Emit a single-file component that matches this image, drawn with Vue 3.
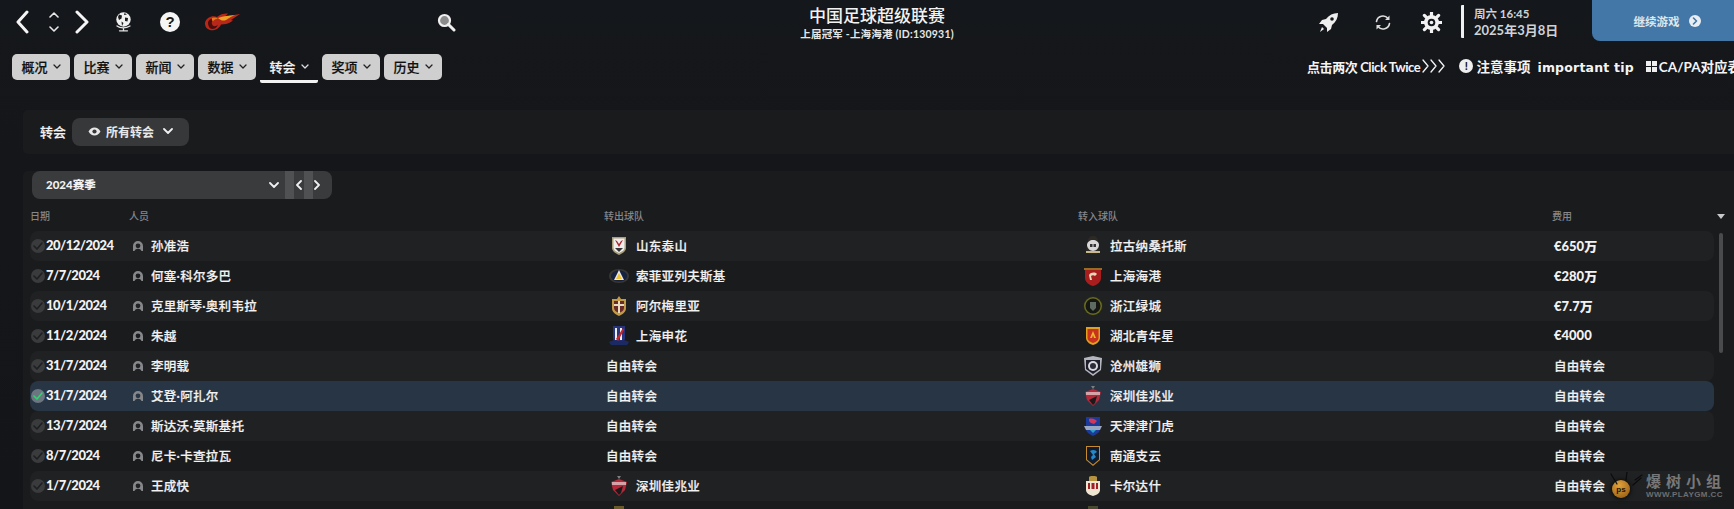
<template>
  <div class="page">
    <header class="top">
      <div class="top-left">
        <svg class="nav-back" width="14" height="24" viewBox="0 0 14 24"><path d="M12 2 3 12l9 10" /></svg>
        <div class="updown">
          <svg width="10" height="8" viewBox="0 0 10 8"><path d="M1 6l4-4 4 4" /></svg>
          <svg width="10" height="8" viewBox="0 0 10 8"><path d="M1 2l4 4 4-4" /></svg>
        </div>
        <svg class="nav-fwd" width="14" height="24" viewBox="0 0 14 24"><path d="M2 2l10 10-10 10" /></svg>
        <svg class="globe" width="17" height="20" viewBox="0 0 17 20">
          <circle cx="8.500" cy="7.500" r="7.200" fill="#f0f0f0" />
          <path d="M4 2.500l3 1-.5 3-2.500 1.500-1-3zM10 5.500l3 .5-.5 3.500-2.500-.5zM6.500 9.500l2 1.500-1.500 3zM9.500 1l2.500 1.500-3 .5z" fill="#1c1c1c" />
          <path d="M2 14c3 2.500 9 2.500 13 0M8.500 16v2.500M4.500 18.800h8" stroke="#e2e2e2" stroke-width="1.300" fill="none" />
        </svg>
        <div class="help">?</div>
        <svg class="flame" width="36" height="18" viewBox="0 0 36 18">
          <path d="M0 10C1 4 8 2 12 4c3-3 8-4 11-3.500l-3 3L35 1l-9 6 2 .5c-4 3-8 4-12 4-2 5-8 6.500-11 5.500C2 16 0 14 0 10z" fill="#b8281a" />
          <path d="M3 10c0-3 4-5.500 8-4-2 .5-5 2-4 5s4 2.500 6 .5c-1 3-3 4.500-6 4.500-2 0-4-3-4-6z" fill="#4d0d0c" />
          <path d="M13 5c5-2 11-2.500 17-3-5 2-6 3.500-9 5s-6 0-8-2z" fill="#eaa323" />
          <path d="M7 5c2-1 4-.5 6 .5-2 .5-4 1-5 3-1-1-1.500-2.500-1-3.500z" fill="#e8761c" />
        </svg>
        <svg class="search" width="19" height="19" viewBox="0 0 19 19">
          <circle cx="7.500" cy="7.500" r="5.500" fill="#8b8b8b" stroke="#f0f0f0" stroke-width="2.200" />
          <path d="M11.500 11.500 17 17" stroke="#f0f0f0" stroke-width="3" stroke-linecap="round" />
        </svg>
      </div>

      <div class="title-box">
        <div class="title">中国足球超级联赛</div>
        <div class="subtitle">上届冠军 -上海海港 (ID:130931)</div>
      </div>

      <div class="top-right">
        <svg class="rocket" width="21" height="21" viewBox="0 0 21 21">
          <path d="M20 1c-5 0-9 2-12 6L4 8 1 12l4 0 4 4 0 4 4-3 1-4c4-3 6-7 6-12z" fill="#eee" />
          <circle cx="14" cy="7" r="1.800" fill="#14171b" />
          <path d="M4 15l2 2-4 3z" fill="#eee" />
        </svg>
        <svg class="sync" width="16" height="17" viewBox="0 0 16 17">
          <path d="M1.500 7.500A6.500 6.500 0 0 1 13 4.500M14.500 9.500A6.500 6.500 0 0 1 3 12.500" fill="none" stroke="#ddd" stroke-width="1.600" />
          <path d="M14.500 1.500v4.500h-4.500zM1.500 15.500v-4.500h4.500z" fill="#ddd" />
        </svg>
        <svg class="gear" width="21" height="21" viewBox="0 0 21 21">
          <path d="M10.500 0.500v20M0.500 10.500h20M3.400 3.400l14.200 14.200M17.600 3.400 3.400 17.600" stroke="#f2f2f2" stroke-width="3.200" fill="none" />
          <circle cx="10.500" cy="10.500" r="7.500" fill="#f2f2f2" />
          <circle cx="10.500" cy="10.500" r="3.800" fill="#14171b" />
          <circle cx="10.500" cy="10.500" r="1.800" fill="#f2f2f2" />
        </svg>
        <div class="clock">
          <div class="clock-time">周六 16:45</div>
          <div class="clock-date">2025年3月8日</div>
        </div>
        <button class="continue" type="button">
          <span>继续游戏</span>
          <span class="continue-dot">
            <svg width="6" height="8" viewBox="0 0 6 8"><path d="M1.500 1 4.500 4l-3 3" /></svg>
          </span>
        </button>
      </div>
    </header>

    <div class="tabs-row">
      <nav class="tabs">
        <div v-for="tab in tabs" :key="tab" class="tab" :class="{ active: tab === '转会' }">
          {{ tab }}
          <svg width="8" height="5" viewBox="0 0 8 5"><path d="M1 1l3 3 3-3" /></svg>
        </div>
      </nav>
      <div class="links">
        <span class="click-twice">点击两次 Click Twice</span>
        <svg class="chevrons" width="23" height="14" viewBox="0 0 23 14">
          <path d="M1 1l5 6-5 6M9 1l5 6-5 6M17 1l5 6-5 6" />
        </svg>
        <span class="info-dot">!</span>
        <span class="tip">注意事项<span class="tip-en">important tip</span></span>
        <span class="grid-icon"><i></i><i></i><i></i><i></i></span>
        <span class="ca">CA/PA对应表</span>
      </div>
    </div>

    <section class="filter-panel">
      <span class="filter-label">转会</span>
      <div class="filter-btn">
        <svg width="13" height="9" viewBox="0 0 13 9">
          <path d="M0.500 4.500C2 1.800 4 0.500 6.500 0.500s4.500 1.300 6 4c-1.500 2.700-3.500 4-6 4s-4.500-1.300-6-4z" fill="#e8e8e8" />
          <circle cx="6.500" cy="4.500" r="2.100" fill="#37383a" />
        </svg>
        所有转会
        <svg class="chev" width="10" height="7" viewBox="0 0 10 7"><path d="M1 1l4 4 4-4" /></svg>
      </div>
    </section>

    <section class="table-panel">
      <div class="season-bar">
        <span class="season-name">2024赛季</span>
        <svg class="chev" width="10" height="7" viewBox="0 0 10 7"><path d="M1 1l4 4 4-4" /></svg>
        <span class="season-sep"></span>
        <svg class="season-arrow" width="6" height="10" viewBox="0 0 6 10"><path d="M5 1 1 5l4 4" /></svg>
        <span class="season-sep second"></span>
        <svg class="season-arrow" width="6" height="10" viewBox="0 0 6 10"><path d="M1 1l4 4-4 4" /></svg>
      </div>

      <div class="grid head">
        <span>日期</span>
        <span>人员</span>
        <span>转出球队</span>
        <span>转入球队</span>
        <span>费用</span>
      </div>
      <svg class="sort" width="8" height="5" viewBox="0 0 8 5"><path d="M0 0h8L4 5z" /></svg>

      <div class="rows">
        <div v-for="(row, i) in rows" :key="i" class="grid row" :class="{ odd: i % 2 === 0, selected: row.selected }">
          <div class="date-cell">
            <span v-if="row.date" class="tick">
              <svg width="10" height="8" viewBox="0 0 10 8"><path d="M1 4l3 3 5-6" /></svg>
            </span>
            <span class="date">{{ row.date }}</span>
          </div>
          <div class="person-cell">
            <svg v-if="row.name" class="person" width="10" height="10" viewBox="0 0 10 10">
              <path fill-rule="evenodd" d="M0 10V5a5 5 0 0 1 10 0v5zM7.400 4.800a2.400 2.400 0 1 1-4.800 0 2.400 2.400 0 0 1 4.800 0zM1.500 10c.5-1.500 2-2.200 3.500-2.200s3 .7 3.500 2.200z" />
            </svg>
            <span class="name">{{ row.name }}</span>
          </div>
          <div class="team-cell">
            <template v-if="row.from">
              <svg class="badge" width="20" height="20" viewBox="0 0 20 20">
                <path v-for="(p, k) in badges[row.from[1]]" :key="k" :d="p[0]" :fill="p[1]" />
              </svg>
              <span class="team">{{ row.from[0] }}</span>
            </template>
            <span v-else-if="row.date" class="free">自由转会</span>
          </div>
          <div class="team-cell">
            <template v-if="row.to">
              <svg class="badge" width="20" height="20" viewBox="0 0 20 20">
                <path v-for="(p, k) in badges[row.to[1]]" :key="k" :d="p[0]" :fill="p[1]" />
              </svg>
              <span class="team">{{ row.to[0] }}</span>
            </template>
          </div>
          <div class="fee" :class="{ cjk: row.fee === '自由转会' }">{{ row.fee }}</div>
        </div>
      </div>
      <div class="scroll-thumb"></div>
    </section>

    <div class="watermark">
      <div class="wm-ball">
        <svg class="wm-spikes" width="44" height="30" viewBox="0 0 44 30">
          <path d="M6 2l6 10M22 0l-1 8M36 6l-8 7M30 8l7-5" />
        </svg>
        <span class="wm-ps">ps</span>
      </div>
      <div class="wm-text">
        <div class="wm-cn">爆树小组</div>
        <div class="wm-url">WWW.PLAYGM.CC</div>
      </div>
    </div>
  </div>
</template>

<script setup>
const tabs = ['概况', '比赛', '新闻', '数据', '转会', '奖项', '历史']

// small crests, each a short list of [path, fill]
const circle = (r) => `M${10 - r} 10a${r} ${r} 0 1 1 ${r * 2} 0 ${r} ${r} 0 0 1-${r * 2} 0z`

const jiazhaoye = [
  ['M2 6l8-3 8 3-2 8-6 6-6-6z', '#b5283a'],
  ['M3 6h14v3H3z', '#d5a2a8'],
  ['M8 0h4l-2 3z', '#7f7f7f'],
  ['M6 14l8-4-2 7-2 2z', '#1a1a1a'],
]

const badges = {
  shandong: [
    ['M3 1h14v11c0 3-3 5-7 7-4-2-7-4-7-7z', '#a89f7a'],
    ['M4.500 2.500h11v9c0 2.500-2 4-5.500 5.500-3.500-1.500-5.500-3-5.500-5.500z', '#eee'],
    ['M6 4l4 7 4-7-2 1-2 3-2-3z', '#b3262c'],
    ['M6 12h8l-4 4z', '#333'],
  ],
  sofia: [
    ['M0 10c0-4 4-7 10-7s10 3 10 7-4 7-10 7-10-3-10-7z', '#3a3630'],
    ['M2 10c0-3 3-5.500 8-5.500s8 2.500 8 5.500-3 5.500-8 5.500-8-2.500-8-5.500z', '#16223f'],
    ['M10 4 15 14H5z', '#e8e8e8'],
    ['M10 7l3 6H7z', '#f1c232'],
  ],
  almeria: [
    ['M10 0l2 3h5v9c0 4-3 6-7 8-4-2-7-4-7-8V3h5z', '#c39a48'],
    ['M5 5h10v7c0 2-2 4-5 5-3-1-5-3-5-5z', '#6b2a2a'],
    ['M9 5h2v12H9zM5 8h10v2H5z', '#e8dcc0'],
  ],
  shenhua: [
    ['M4 0h12v12c0 2-2 4-3 4H7c-1 0-3-2-3-4z', '#27357e'],
    ['M6 2h2v12H6zM11 2h2v12h-2z', '#eee'],
    ['M7 13 14 2l1 2-6 11z', '#c2272d'],
    ['M0 16c3-2 7-2 10-1 3-1 7-1 10 1l-2 3H2z', '#1c2a63'],
  ],
  lagos: [
    ['M5 5c0-3 2-5 5-5s5 2 5 5l2 9-3 4H6l-3-4z', '#2d2a25'],
    ['M4 9c0-3 3-5 6-5s6 2 6 5-3 6-6 6-6-3-6-6z', '#d8d8d8'],
    ['M7 8h2.500v3H7zM10.500 8H13v3h-2.500z', '#333'],
    ['M3 15h14v2H3z', '#c7b98c'],
  ],
  haigang: [
    ['M1 2h18v2H1z', '#9a6b22'],
    ['M2 4h16v8c0 4-4 7-8 8-4-1-8-4-8-8z', '#a81e1e'],
    ['M6 9c2-3 6-3 8-1l-2 2c-1-1-3-1-4 0l1 4-2 0z', '#e9d7b5'],
  ],
  lvcheng: [
    [circle(10), '#23291c'],
    [circle(9), '#6b6a22'],
    [circle(7.500), '#151812'],
    ['M7 6h6v6l-3 3-3-3z', '#5d6b62'],
  ],
  hubei: [
    ['M3 1h14v11c0 3-3 6-7 7-4-1-7-4-7-7z', '#e0a020'],
    ['M4.500 3h11v9c0 2-2 4-5.500 5-3.500-1-5.500-3-5.500-5z', '#c8321e'],
    ['M10 5l3 7h-2l-1-3-1 3H7z', '#eeb92a'],
  ],
  cangzhou: [
    ['M1 2l9-2 9 2-1 12-8 6-8-6z', '#b5b5bd'],
    ['M3 4h14v9l-7 5-7-5z', '#1d1d2b'],
    [circle(5), '#d8d8de'],
    [circle(3), '#2b2b3a'],
  ],
  jiazhaoye,
  tianjin: [
    ['M3 1h14v12c0 3-3 5-7 7-4-2-7-4-7-7z', '#1c3a9a'],
    ['M6 3c3-1 6 0 8 2l-3 3c-2-1-4-1-5-3z', '#d2385a'],
    ['M1 10h18l-2 4H3z', '#9aa7c2'],
    ['M7 14h6l-3 3z', '#2ba0c8'],
  ],
  nantong: [
    ['M3 0h14v14l-7 6-7-6z', '#c78a2e'],
    ['M4 1h12v12.500l-6 5-6-5z', '#101c2e'],
    ['M7 5c3-2 6-1 7 1l-3 2 2 3-4 3-1-3 2-2z', '#2288cc'],
  ],
  cardiz: [
    ['M6 1c1-1.500 7-1.500 8 0v4H6z', '#b6933e'],
    ['M3 5h14v9c0 3-3 5-7 6-4-1-7-3-7-6z', '#efe6d2'],
    ['M5 7h10v6H5z', '#a21f24'],
    ['M7 7h1.500v6H7zM11.500 7H13v6h-1.500z', '#efe6d2'],
  ],
  nextA: [['M5 0h10v6H5z', '#6a5a2a']],
  nextB: [['M5 0h10v6H5z', '#4a4a30']],
}

const rows = [
  { date: '20/12/2024', name: '孙准浩', from: ['山东泰山', 'shandong'], to: ['拉古纳桑托斯', 'lagos'], fee: '€650万' },
  { date: '7/7/2024', name: '何塞·科尔多巴', from: ['索菲亚列夫斯基', 'sofia'], to: ['上海海港', 'haigang'], fee: '€280万' },
  { date: '10/1/2024', name: '克里斯琴·奥利韦拉', from: ['阿尔梅里亚', 'almeria'], to: ['浙江绿城', 'lvcheng'], fee: '€7.7万' },
  { date: '11/2/2024', name: '朱越', from: ['上海申花', 'shenhua'], to: ['湖北青年星', 'hubei'], fee: '€4000' },
  { date: '31/7/2024', name: '李明载', to: ['沧州雄狮', 'cangzhou'], fee: '自由转会' },
  { date: '31/7/2024', name: '艾登·阿扎尔', to: ['深圳佳兆业', 'jiazhaoye'], fee: '自由转会', selected: true },
  { date: '13/7/2024', name: '斯达沃·莫斯基托', to: ['天津津门虎', 'tianjin'], fee: '自由转会' },
  { date: '8/7/2024', name: '尼卡·卡查拉瓦', to: ['南通支云', 'nantong'], fee: '自由转会' },
  { date: '1/7/2024', name: '王成快', from: ['深圳佳兆业', 'jiazhaoye'], to: ['卡尔达什', 'cardiz'], fee: '自由转会' },
  { date: '', name: '', from: ['', 'nextA'], to: ['', 'nextB'], fee: '' },
]
</script>

<style>
html,
body {
  margin: 0;
  background: #141518;
}
</style>

<style scoped>
.page {
  position: relative;
  height: 509px;
  overflow: hidden;
  background: linear-gradient(180deg, #14171b 0%, #141518 100%);
  color: #f2f2f2;
  font-family: Lato, "Noto Sans CJK SC", sans-serif;
}

svg path {
  stroke-linecap: round;
  stroke-linejoin: round;
}

/* header */
.top {
  display: grid;
  grid-template-columns: 740px 274px 1fr;
  height: 44px;
}

.top-left {
  display: flex;
  align-items: center;
  padding-left: 15px;
}

.nav-back path,
.nav-fwd path {
  fill: none;
  stroke: #f5f5f5;
  stroke-width: 3;
}

.updown {
  display: flex;
  flex-direction: column;
  gap: 6px;
  margin-left: 20px;
}

.updown svg {
  display: block;
}

.updown path {
  fill: none;
  stroke: #e8e8e8;
  stroke-width: 1.600;
}

.nav-fwd {
  margin-left: 16px;
}

.globe {
  margin-left: 26px;
}

.help {
  width: 20px;
  height: 20px;
  margin-left: 28px;
  border-radius: 50%;
  background: #f5f5f5;
  color: #15171a;
  font: 700 15px/20px "Liberation Sans", sans-serif;
  text-align: center;
}

.flame {
  margin-left: 25px;
}

.search {
  margin-left: 196px;
}

.title-box {
  text-align: center;
  padding-top: 6px;
}

.title {
  font-size: 17px;
  font-weight: 500;
  line-height: 20px;
}

.subtitle {
  font-size: 10.500px;
  font-weight: 700;
  line-height: 14px;
  letter-spacing: 0.200px;
  margin-top: 1px;
  color: #e6e6e6;
}

.top-right {
  display: flex;
  align-items: flex-start;
  padding-left: 304px;
}

.rocket {
  margin-top: 12px;
}

.sync {
  margin: 14px 0 0 36px;
}

.gear {
  margin: 12px 0 0 30px;
}

.clock {
  flex: none;
  width: 131px;
  height: 33px;
  margin: 5px 0 0 19px;
  padding-left: 10px;
  box-sizing: border-box;
  border-left: 3px solid #f0f0f0;
  border-radius: 1px;
}

.clock-time,
.clock-date {
  color: #cfd2d6;
  font-weight: 700;
  line-height: 17px;
}

.clock-time {
  font-size: 11.500px;
}

.clock-date {
  font-size: 13px;
}

.continue {
  flex: none;
  display: flex;
  align-items: center;
  justify-content: center;
  gap: 9px;
  width: 142px;
  height: 41px;
  padding: 0 0 0 8px;
  border: 0;
  border-radius: 0 0 0 8px;
  background: #4277a8;
  color: #dfe6ec;
  font: 700 11.500px Lato, "Noto Sans CJK SC", sans-serif;
}

.continue-dot {
  display: flex;
  align-items: center;
  justify-content: center;
  width: 12px;
  height: 12px;
  border-radius: 50%;
  background: #e8edf2;
}

.continue-dot path {
  fill: none;
  stroke: #4277a8;
  stroke-width: 1.600;
}

/* second row */
.tabs-row {
  display: flex;
  justify-content: space-between;
  height: 26px;
  margin-top: 10px;
  padding-left: 12px;
}

.tabs {
  display: flex;
  align-items: flex-start;
  gap: 4px;
}

.tab {
  display: flex;
  align-items: center;
  justify-content: center;
  gap: 5px;
  width: 58px;
  height: 26px;
  box-sizing: border-box;
  padding-bottom: 2px;
  border-radius: 5px;
  background: #cfcfcf;
  color: #111;
  font-size: 13px;
  font-weight: 500;
  -webkit-text-stroke: 0.200px;
}

.tab path {
  fill: none;
  stroke: #222;
  stroke-width: 1.300;
}

.tab.active {
  height: 29px;
  background: none;
  color: #f2f2f2;
  border-bottom: 3px solid #f2f2f2;
  border-radius: 2px;
}

.tab.active path {
  stroke: #ddd;
}

.links {
  display: flex;
  align-items: center;
  width: 427px;
  padding-bottom: 2px;
  box-sizing: border-box;
  overflow: hidden;
  white-space: nowrap;
  font-weight: 700;
  color: #f4f4f4;
  font-size: 13px;
}

.click-twice {
  font-size: 13px;
  letter-spacing: -0.400px;
}

.chevrons {
  flex: none;
  margin-left: 2px;
}

.chevrons path {
  fill: none;
  stroke: #f4f4f4;
  stroke-width: 1.300;
}

.info-dot {
  flex: none;
  width: 14px;
  height: 14px;
  margin-left: 14px;
  border-radius: 50%;
  background: #eee;
  color: #15171a;
  font-size: 11px;
  font-weight: 900;
  line-height: 14px;
  text-align: center;
}

.tip {
  margin-left: 3px;
  font-size: 13.500px;
}

.tip-en {
  margin-left: 7px;
  letter-spacing: 0.200px;
  font-family: "DejaVu Sans", sans-serif;
  font-size: 12.500px;
}

.grid-icon {
  flex: none;
  display: grid;
  grid-template-columns: 5px 5px;
  gap: 1px;
  margin-left: 12px;
}

.grid-icon i {
  height: 5px;
  background: #eee;
}

.ca {
  margin-left: 2px;
  flex: none;
  font-size: 13.500px;
}

/* panels */
.filter-panel {
  display: flex;
  align-items: center;
  gap: 6px;
  height: 44px;
  margin: 30px 0 0 23px;
  padding-left: 17px;
  background: #1a1b1d;
  border-radius: 5px 0 0 5px;
}

.filter-label {
  margin-bottom: 2px;
  font-size: 13px;
  font-weight: 500;
  -webkit-text-stroke: 0.200px;
}

.filter-btn {
  display: flex;
  align-items: center;
  gap: 5px;
  width: 117px;
  height: 28px;
  box-sizing: border-box;
  padding: 0 0 2px 16px;
  border-radius: 8px;
  background: #37383a;
  color: #e8e8e8;
  font-size: 12px;
  font-weight: 700;
}

.chev {
  flex: none;
}

.chev path {
  fill: none;
  stroke: #f0f0f0;
  stroke-width: 1.800;
}

.filter-btn .chev {
  margin-left: 4px;
}

.table-panel {
  position: relative;
  height: 400px;
  margin: 17px 0 0 23px;
  background: #1a1b1d;
  border-radius: 5px 0 0 0;
}

.season-bar {
  display: flex;
  align-items: center;
  width: 300px;
  height: 28px;
  box-sizing: border-box;
  margin-left: 9px;
  padding-left: 14px;
  border-radius: 8px;
  background: #3a3b3d;
}

.season-name {
  flex: 1;
  padding-bottom: 2px;
  font-size: 11.500px;
  font-weight: 900;
}

.season-sep {
  width: 9px;
  height: 28px;
  margin-left: 6px;
  background: #505153;
}

.season-sep.second {
  margin-left: 2px;
}

.season-arrow {
  margin-left: 2px;
}

.season-arrow:last-child {
  margin: 0 12px 0 1px;
}

.season-arrow path {
  fill: none;
  stroke: #f0f0f0;
  stroke-width: 1.800;
}

.grid {
  display: grid;
  grid-template-columns: 99px 475px 474px 474px 1fr;
}

.head {
  height: 32px;
  align-items: center;
  margin: 0 20px 0 7px;
  color: #85878a;
  font-size: 10px;
  font-weight: 500;
  box-sizing: border-box;
}

.sort {
  position: absolute;
  left: 1694px;
  top: 43px;
}

.sort path {
  fill: #c9c9c9;
}

.rows {
  margin: 0 20px 0 7px;
}

.row {
  height: 30px;
  box-sizing: border-box;
  padding-bottom: 2px;
  align-items: center;
  border-radius: 8px;
  font-size: 13px;
}

.row.odd {
  background: #202123;
}

.row.selected {
  background: #273545;
}

.date-cell {
  display: flex;
  align-items: center;
  gap: 1px;
  padding-left: 1px;
}

.tick {
  flex: none;
  display: flex;
  align-items: center;
  justify-content: center;
  width: 14px;
  height: 14px;
  margin-top: 2px;
  border-radius: 50%;
  background: #3a3b3d;
}

.tick path {
  fill: none;
  stroke: #1e1f21;
  stroke-width: 1.600;
}

.selected .tick {
  background: #6c7680;
}

.selected .tick path {
  stroke: #27d86a;
}

.date {
  font-weight: 900;
  font-size: 13px;
  letter-spacing: -0.500px;
}

.person-cell {
  display: flex;
  align-items: center;
  gap: 8px;
  padding-left: 4px;
}

.person {
  flex: none;
  margin-top: 2px;
}

.person path {
  fill: #85878a;
}

.name,
.team,
.free {
  font-size: 12.500px;
  font-weight: 500;
  letter-spacing: 0.300px;
  -webkit-text-stroke: 0.200px;
}

.team-cell {
  display: flex;
  align-items: center;
  padding-left: 2px;
}

.team-cell .badge {
  flex: none;
  margin: 2px 7px 0 3px;
}

.fee {
  padding-left: 2px;
  font-weight: 900;
}

.fee.cjk {
  font-size: 12.500px;
  font-weight: 500;
  letter-spacing: 0.300px;
  -webkit-text-stroke: 0.200px;
}

.scroll-thumb {
  position: absolute;
  left: 1696px;
  top: 62px;
  width: 4px;
  height: 120px;
  border-radius: 2px;
  background: #4a4b4d;
}

/* forum watermark over the corner */
.watermark {
  position: absolute;
  left: 1612px;
  top: 472px;
  display: flex;
  align-items: flex-start;
  gap: 16px;
}

.wm-ball {
  position: relative;
  width: 18px;
  height: 18px;
  margin-top: 8px;
  border-radius: 50%;
  background: radial-gradient(circle at 40% 30%, #e3a33a, #8a5410);
  box-shadow: 0 0 5px #000;
}

.wm-spikes {
  position: absolute;
  left: -7px;
  top: -8px;
}

.wm-spikes path {
  fill: none;
  stroke: #0b0b0b;
  stroke-width: 1.200;
}

.wm-ps {
  display: block;
  color: #1a1208;
  font: 700 8px/20px "Liberation Sans", sans-serif;
  text-align: center;
}

.wm-cn {
  color: #77787a;
  font: 700 15px/18px "Noto Sans CJK SC", sans-serif;
  letter-spacing: 5px;
}

.wm-url {
  color: #6d6e70;
  font: 700 8px/9px "Liberation Sans", sans-serif;
  letter-spacing: 0.400px;
}
</style>
